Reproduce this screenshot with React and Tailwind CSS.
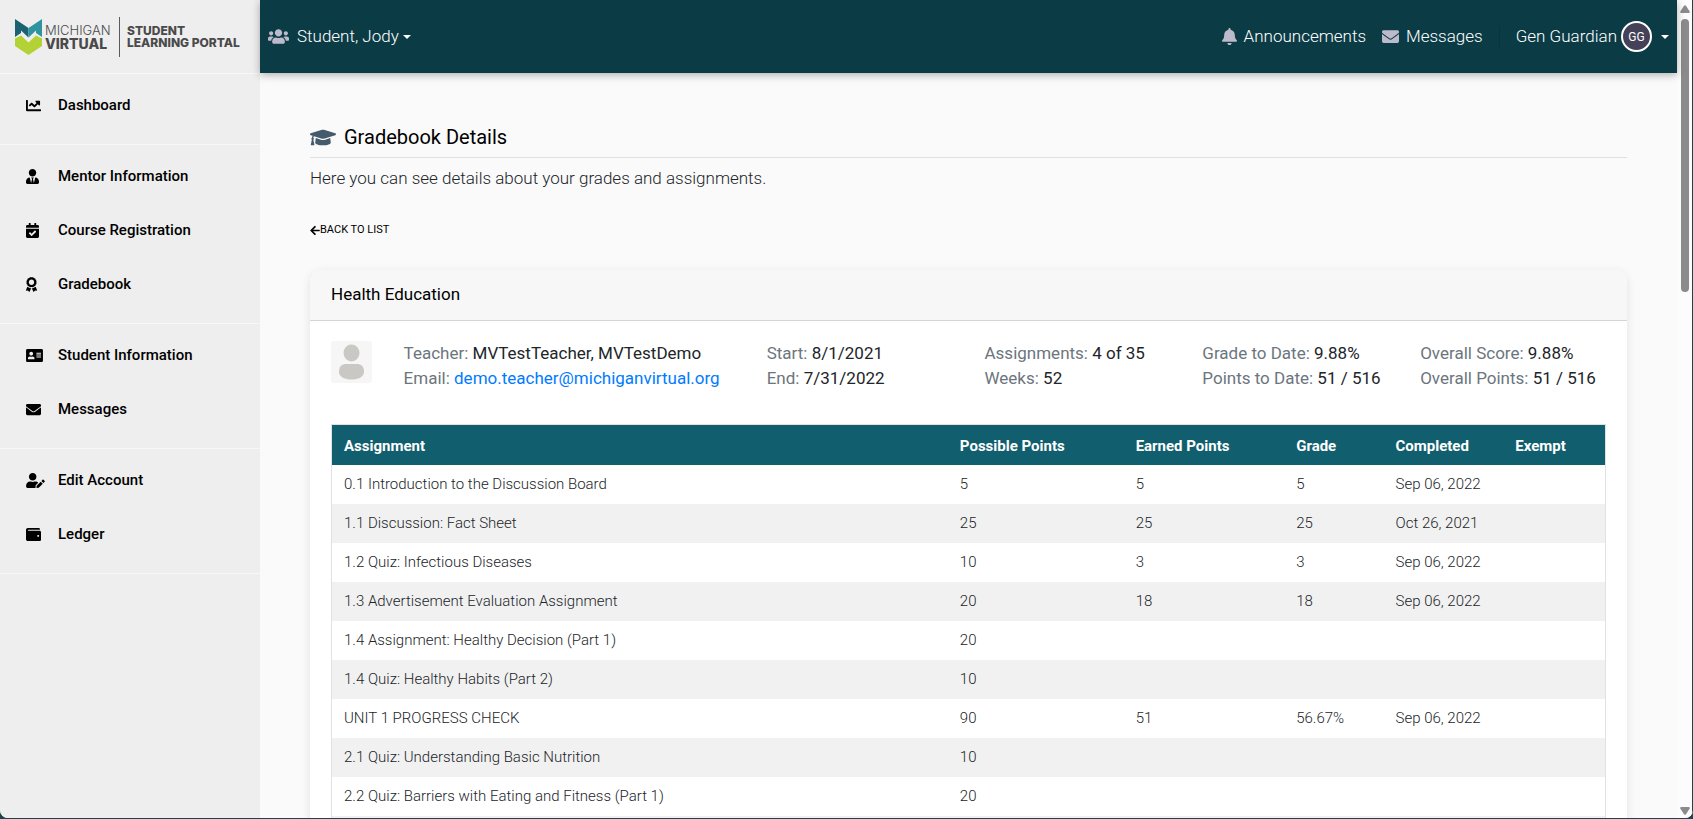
import React from 'react';
import {
  FaAddressCard,
  FaArrowLeft,
  FaAward,
  FaBell,
  FaCalendarCheck,
  FaChartLine,
  FaEnvelope,
  FaGraduationCap,
  FaUserEdit,
  FaUserTie,
  FaUsers,
  FaWallet,
} from 'react-icons/fa';

const navGroups = [
  [{ label: 'Dashboard', icon: FaChartLine, size: 'w-[15px]' }],
  [
    { label: 'Mentor Information', icon: FaUserTie, size: 'w-[13px]' },
    { label: 'Course Registration', icon: FaCalendarCheck, size: 'w-[13px]' },
    { label: 'Gradebook', icon: FaAward, size: 'w-[11px]' },
  ],
  [
    { label: 'Student Information', icon: FaAddressCard, size: 'w-[17px]' },
    { label: 'Messages', icon: FaEnvelope, size: 'w-[15px]' },
  ],
  [
    { label: 'Edit Account', icon: FaUserEdit, size: 'w-[19px]' },
    { label: 'Ledger', icon: FaWallet, size: 'w-[15px]' },
  ],
];

const stats = [
  [['Start:', '8/1/2021'], ['End:', '7/31/2022']],
  [['Assignments:', '4 of 35'], ['Weeks:', '52']],
  [['Grade to Date:', '9.88%'], ['Points to Date:', '51 / 516']],
  [['Overall Score:', '9.88%'], ['Overall Points:', '51 / 516']],
];

const columns = [
  { label: 'Assignment', width: 'w-[48.3%]' },
  { label: 'Possible Points', width: 'w-[13.8%]' },
  { label: 'Earned Points', width: 'w-[12.6%]' },
  { label: 'Grade', width: 'w-[7.8%]' },
  { label: 'Completed', width: 'w-[9.4%]' },
  { label: 'Exempt', width: 'w-[8.1%]' },
];

const rows = [
  ['0.1 Introduction to the Discussion Board', '5', '5', '5', 'Sep 06, 2022', ''],
  ['1.1 Discussion: Fact Sheet', '25', '25', '25', 'Oct 26, 2021', ''],
  ['1.2 Quiz: Infectious Diseases', '10', '3', '3', 'Sep 06, 2022', ''],
  ['1.3 Advertisement Evaluation Assignment', '20', '18', '18', 'Sep 06, 2022', ''],
  ['1.4 Assignment: Healthy Decision (Part 1)', '20', '', '', '', ''],
  ['1.4 Quiz: Healthy Habits (Part 2)', '10', '', '', '', ''],
  ['UNIT 1 PROGRESS CHECK', '90', '51', '56.67%', 'Sep 06, 2022', ''],
  ['2.1 Quiz: Understanding Basic Nutrition', '10', '', '', '', ''],
  ['2.2 Quiz: Barriers with Eating and Fitness (Part 1)', '20', '', '', '', ''],
  ['', '', '', '', '', ''],
];

const Caret = () => (
  <svg viewBox="0 0 8 4" className="h-1 w-2 fill-white" aria-hidden="true">
    <path d="M0 0h8L4 4z" />
  </svg>
);

const Logo = () => (
  <a href="#home" className="flex h-[73px] items-center pl-[15px] text-[#4a4a4a]">
    <svg viewBox="0 0 27 36" className="h-9 w-[27px] shrink-0" aria-hidden="true">
      <path d="M0 19.500l6-3 7.500 7 7.500-7 6 3V27L13.500 36 0 27z" fill="#b2d235" />
      <path d="M0 0v18l6-4V11.500l7.500 7V9z" fill="#1b6272" />
      <path d="M27 0v18l-6-4V11.500l-7.500 7V9z" fill="#2e95a0" />
    </svg>
    <span className="ml-[3px] flex w-[64px] flex-col font-[Inter,sans-serif] leading-[13px]">
      <span className="text-[13px] font-light">MICHIGAN</span>
      <span className="text-[14px] font-extrabold">VIRTUAL</span>
    </span>
    <span className="ml-[10px] h-10 w-px bg-[#5a5a5a]" />
    <span className="ml-[7px] flex flex-col font-[Inter,sans-serif] text-[12px] leading-[12px] font-extrabold whitespace-nowrap">
      <span>STUDENT</span>
      <span>LEARNING PORTAL</span>
    </span>
  </a>
);

const Sidebar = () => (
  <aside className="w-[260px] shrink-0 bg-[#eeeeee]">
    <Logo />
    <nav className="border-t border-[#f7f7f7]">
      {navGroups.map((group) => (
        <ul key={group[0].label} className="border-b border-[#f7f7f7] py-2">
          {group.map(({ label, icon: Icon, size }) => (
            <li key={label} className="mb-2">
              <a
                href={`#${label.toLowerCase().replace(' ', '-')}`}
                className="flex h-[46px] items-center pl-[26px] text-[15px] font-medium text-black"
              >
                <span className="w-8">
                  <Icon className={`h-[15px] ${size}`} />
                </span>
                {label}
              </a>
            </li>
          ))}
        </ul>
      ))}
    </nav>
  </aside>
);

const Header = () => (
  <header className="relative flex h-[73px] shrink-0 items-center justify-between bg-[#0b3c46] px-2 text-[17px] font-light text-white shadow-[0_2px_8px_rgba(0,0,0,0.3)]">
    <button type="button" className="flex items-center gap-1">
      <FaUsers className="mr-1 h-[17px] w-[21px] text-[#bdbacb]" />
      Student, Jody
      <Caret />
    </button>
    <div className="flex items-center">
      <a href="#announcements" className="flex items-center gap-[7px]">
        <FaBell className="h-[17px] w-[15px] text-[#bdbacb]" />
        Announcements
      </a>
      <a href="#inbox" className="ml-4 flex items-center gap-[7px]">
        <FaEnvelope className="h-[17px] w-[17px] text-[#bdbacb]" />
        Messages
      </a>
      <span className="ml-4 h-[22px] w-px bg-[#0a353e]" />
      <button type="button" className="ml-4 flex items-center gap-1">
        Gen Guardian
        <span className="mr-[5px] flex size-[31px] items-center justify-center rounded-full border-2 border-white bg-[#444158] text-[12px] font-normal">
          GG
        </span>
        <Caret />
      </button>
    </div>
  </header>
);

const CourseSummary = () => (
  <div className="-mx-4 grid grid-cols-[minmax(0,2fr)_minmax(0,10fr)_minmax(0,6fr)_minmax(0,6fr)_minmax(0,6fr)_minmax(0,6fr)] text-[17px] leading-[25px] whitespace-nowrap text-[#212529]">
    <div className="pl-4">
      <svg viewBox="0 0 41 42" className="h-[42px] w-[41px]" role="img" aria-label="Teacher photo">
        <rect width="41" height="42" rx="3" fill="#f6f6f6" />
        <ellipse cx="20.500" cy="12" rx="8" ry="8.500" fill="#c9c8c4" />
        <path d="M8 31c0-6 3-8 7-8h11c4 0 7 2 7 8 0 5-6 7.500-12.500 7.500S8 36 8 31z" fill="#c9c8c4" />
      </svg>
    </div>
    <div className="pl-4">
      <p><span className="text-[#6c757d]">Teacher:</span> MVTestTeacher, MVTestDemo</p>
      <p>
        <span className="text-[#6c757d]">Email:</span>{' '}
        <a href="mailto:demo.teacher@michiganvirtual.org" className="text-[#007bff]">
          demo.teacher@michiganvirtual.org
        </a>
      </p>
    </div>
    {stats.map((pair) => (
      <div key={pair[0][0]} className="pl-4">
        {pair.map(([label, value]) => (
          <p key={label}><span className="text-[#6c757d]">{label}</span> {value}</p>
        ))}
      </div>
    ))}
  </div>
);

const GradeTable = () => (
  <table className="mt-[33px] w-full table-fixed border border-[#dee2e6] text-left text-[15px] text-[#212529]">
    <thead>
      <tr className="h-[41px] bg-[#115e6e] text-white">
        {columns.map(({ label, width }) => (
          <th key={label} scope="col" className={`px-[13px] pt-[2px] font-bold first:pl-3 ${width}`}>{label}</th>
        ))}
      </tr>
    </thead>
    <tbody>
      {rows.map((row) => (
        <tr key={row[0]} className="h-[39px] bg-white font-light even:bg-[#f1f1f1]">
          {row.map((cell, i) => (
            <td key={columns[i].label} className="px-[13px] first:pl-3">{cell}</td>
          ))}
        </tr>
      ))}
    </tbody>
  </table>
);

const Scrollbar = () => (
  <div className="flex w-4 shrink-0 flex-col items-center border-r border-[#1d444d] bg-[#fcfcfc]" aria-hidden="true">
    <svg viewBox="0 0 10 8" className="mt-[5px] h-2 w-[10px] fill-[#8b8b8b]">
      <path d="M4 .8Q5-.5 6 .8l3.700 5.700Q10 8 9 8H1Q0 8 .3 6.500z" />
    </svg>
    <div className="mt-[6px] h-1/3 w-2 rounded-full bg-[#8b8b8b]" />
    <svg viewBox="0 0 10 8" className="mt-auto mb-[3px] h-2 w-[10px] fill-[#8b8b8b]">
      <path d="M4 7.200Q5 8.500 6 7.200l3.700-5.700Q10 0 9 0H1Q0 0 .3 1.500z" />
    </svg>
  </div>
);

export default function App() {
  return (
    <div className="h-screen bg-[#1d444d] pb-px font-[Roboto,sans-serif]">
      <div className="flex h-full overflow-hidden rounded-b-lg bg-[#fafafa]">
        <Sidebar />
        <div className="flex min-w-0 flex-1 flex-col">
          <Header />
          <main className="min-h-0 flex-1 overflow-hidden px-[50px] pt-[50px]">
            <h1 className="flex items-center gap-2 border-b border-[#dfdfdf] pb-[6px] text-[20px] leading-7 text-black">
              <FaGraduationCap className="h-[21px] w-[26px] text-[#455a6b]" />
              Gradebook Details
            </h1>
            <p className="mt-2 text-[17px] leading-[25px] font-light text-[#212529]">
              Here you can see details about your grades and assignments.
            </p>
            <a href="#gradebook" className="mt-[31px] inline-flex items-center text-[11px] leading-4 text-black">
              <FaArrowLeft className="h-[11px] w-[10px]" />
              BACK TO LIST
            </a>
            <section className="mt-[27px] rounded-t-xl bg-white shadow-[0_2px_10px_rgba(0,0,0,0.1)]">
              <h2 className="rounded-t-xl border-b border-[#d5d5d5] bg-[#f7f7f7] px-[21px] pt-[11px] pb-[13px] text-[17px] leading-[26px] text-black">
                Health Education
              </h2>
              <div className="px-[21px] pt-5">
                <CourseSummary />
                <GradeTable />
              </div>
            </section>
          </main>
        </div>
        <Scrollbar />
      </div>
    </div>
  );
}
